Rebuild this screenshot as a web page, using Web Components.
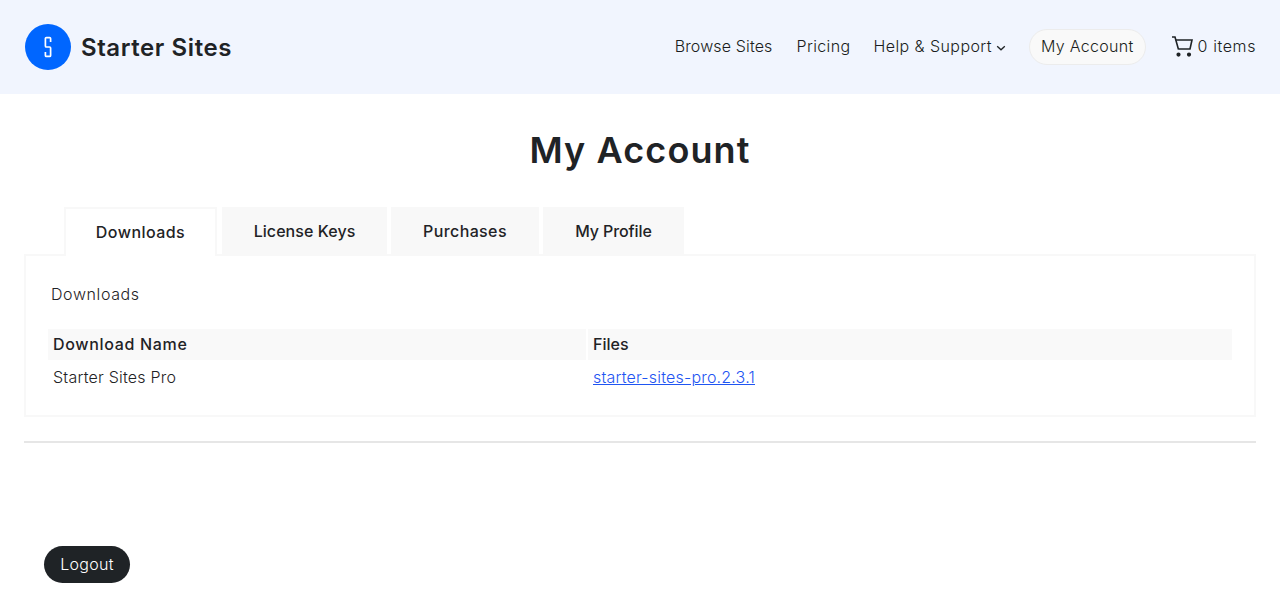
<!DOCTYPE html>
<html lang="en">
<head>
<meta charset="utf-8">
<title>My Account</title>
<style>
  html, body { margin: 0; background: #fff; }
  body { font-family: Inter, "Liberation Sans", sans-serif; font-weight: 300; color: #1f2326; }
</style>
</head>
<body>
<site-header></site-header>
<account-page></account-page>
<script>
class SiteHeader extends HTMLElement {
  static css = `
    :host { display: flex; align-items: center; justify-content: space-between; height: 94px; padding: 0 24px 0 25px; background: #f1f5fe; }
    .brand { display: flex; align-items: center; gap: 10px; font-size: 24px; font-weight: 600; color: #1f2326; letter-spacing: .58px; }
    .brand svg { display: block; }
    nav { display: flex; align-items: center; font-size: 16px; color: #1a1d20; }
    nav a { color: inherit; text-decoration: none; margin-right: 24px; padding-bottom: 2px; display: flex; align-items: center; }
    nav svg.chev { margin-left: 4px; margin-top: 3px; }
    .pill { box-sizing: border-box; height: 36px; padding: 0 11px 2px; margin: 0 25px 0 0; border: 1px solid #ececec; border-radius: 18px; background: #f9f9f9; }
    .cart { margin: 0; gap: 5px; }
  `;
  constructor() {
    super();
    this.attachShadow({ mode: "open" });
  }
  connectedCallback() {
    this.shadowRoot.innerHTML = `
      <style>${SiteHeader.css}</style>
      <div class="brand">
        <svg width="46" height="46" viewBox="0 0 46 46">
          <circle cx="23" cy="23" r="23" fill="#0066ff"/>
          <path d="M25.6 18V14.6Q25.6 13.6 24.6 13.6H21.4Q20.4 13.6 20.4 14.6V22Q20.4 23 21.4 23H24.6Q25.6 23 25.6 24V31.4Q25.6 32.4 24.6 32.4H21.4Q20.4 32.4 20.4 31.4V28" fill="none" stroke="#fff" stroke-width="1.7"/>
        </svg>
        <span>Starter Sites</span>
      </div>
      <nav>
        <a href="#" style="letter-spacing:.14px;margin-right:24px">Browse Sites</a>
        <a href="#" style="letter-spacing:.36px;margin-right:23px">Pricing</a>
        <a href="#" style="letter-spacing:.43px;margin-right:23px">Help &amp; Support<svg class="chev" width="10" height="6" viewBox="0 0 10 6"><path d="M1.2 1.2 5 4.8 8.8 1.2" fill="none" stroke="#1f2326" stroke-width="1.3"/></svg></a>
        <a class="pill" href="#" style="letter-spacing:.3px">My Account</a>
        <a class="cart" href="#" style="letter-spacing:.6px">
          <svg width="22" height="21" viewBox="0 0 22 21" fill="none" stroke="#1f2326" stroke-width="1.6">
            <path d="M1 1H4L7.5 13.5"/>
            <path d="M4.7 4H21L19 13H7.5"/>
            <circle cx="7.5" cy="18.6" r="1.3" fill="#1f2326"/>
            <circle cx="18" cy="18.6" r="1.3" fill="#1f2326"/>
          </svg>
          <span>0 items</span>
        </a>
      </nav>
    `;
  }
}

class AccountTabs extends HTMLElement {
  static css = `
    :host { display: block; }
    .tabs { display: flex; align-items: flex-start; gap: 4px; padding-left: 40px; position: relative; z-index: 1; margin-bottom: -2px; }
    .tab { box-sizing: border-box; height: 48px; display: flex; align-items: center; justify-content: center; background: #f8f8f8; font-size: 16px; font-weight: 500; color: #1f2326; }
    .tab.on { height: 49px; padding-bottom: 1px; background: #fff; border: 2px solid #f8f8f8; border-bottom: 0; margin-right: 1px; }
    .panel { display: block; box-sizing: border-box; border: 2px solid #f8f8f8; padding: 0 20px; height: 163px; }
  `;
  constructor() {
    super();
    this.attachShadow({ mode: "open" });
  }
  connectedCallback() {
    const tabs = [["Downloads", 153, .45], ["License Keys", 165, .07], ["Purchases", 148, .38], ["My Profile", 141, -.1]];
    this.shadowRoot.innerHTML = `
      <style>${AccountTabs.css}</style>
      <div class="tabs">
        ${tabs.map(([t, w, ls], i) => `<div class="tab ${i ? "" : "on"}" style="width:${w}px;letter-spacing:${ls}px">${t}</div>`).join("")}
      </div>
      <div class="panel"><slot></slot></div>
    `;
  }
}

class DownloadsTable extends HTMLElement {
  static css = `
    :host { display: block; font-size: 16px; color: #1f2326; }
    p { margin: 0; padding: 28px 0 0 5px; line-height: 20px; letter-spacing: .6px; }
    table { width: 1188px; margin-top: 23px; border-collapse: separate; border-spacing: 2px; table-layout: fixed; }
    th, td { padding: 0 5px 2px; text-align: left; }
    th { height: 31px; box-sizing: border-box; background: #f9f9f9; font-weight: 500; }
    td { height: 31px; box-sizing: border-box; }
    a { color: #1f55f2; }
  `;
  constructor() {
    super();
    this.attachShadow({ mode: "open" });
  }
  connectedCallback() {
    this.shadowRoot.innerHTML = `
      <style>${DownloadsTable.css}</style>
      <p>Downloads</p>
      <table>
        <colgroup><col style="width:538px"><col></colgroup>
        <tr><th style="letter-spacing:.68px">Download Name</th><th>Files</th></tr>
        <tr><td style="letter-spacing:.22px">Starter Sites Pro</td><td style="letter-spacing:.2px"><a href="#">starter-sites-pro.2.3.1</a></td></tr>
      </table>
    `;
  }
}

class AccountPage extends HTMLElement {
  static css = `
    :host { display: block; padding: 0 24px; }
    h1 { margin: 0; padding-top: 34px; height: 79px; box-sizing: border-box; text-align: center; font-size: 36px; line-height: 44px; font-weight: 600; color: #1f2326; letter-spacing: 1.1px; }
    hr { height: 2px; margin: 24px 0 0; border: 0; background: #e6e6e6; }
    button { display: block; margin: 103px 0 0 20px; height: 37px; width: 86px; padding: 0 0 2px; border: 0; border-radius: 19px; background: #1f2326; color: #fff; font: 300 16px Inter, "Liberation Sans", sans-serif; letter-spacing: .3px; }
  `;
  constructor() {
    super();
    this.attachShadow({ mode: "open" });
  }
  connectedCallback() {
    this.shadowRoot.innerHTML = `
      <style>${AccountPage.css}</style>
      <h1>My Account</h1>
      <div style="height:34px"></div>
      <account-tabs><downloads-table></downloads-table></account-tabs>
      <hr>
      <button>Logout</button>
    `;
  }
}

customElements.define("site-header", SiteHeader);
customElements.define("account-tabs", AccountTabs);
customElements.define("downloads-table", DownloadsTable);
customElements.define("account-page", AccountPage);
</script>
</body>
</html>
